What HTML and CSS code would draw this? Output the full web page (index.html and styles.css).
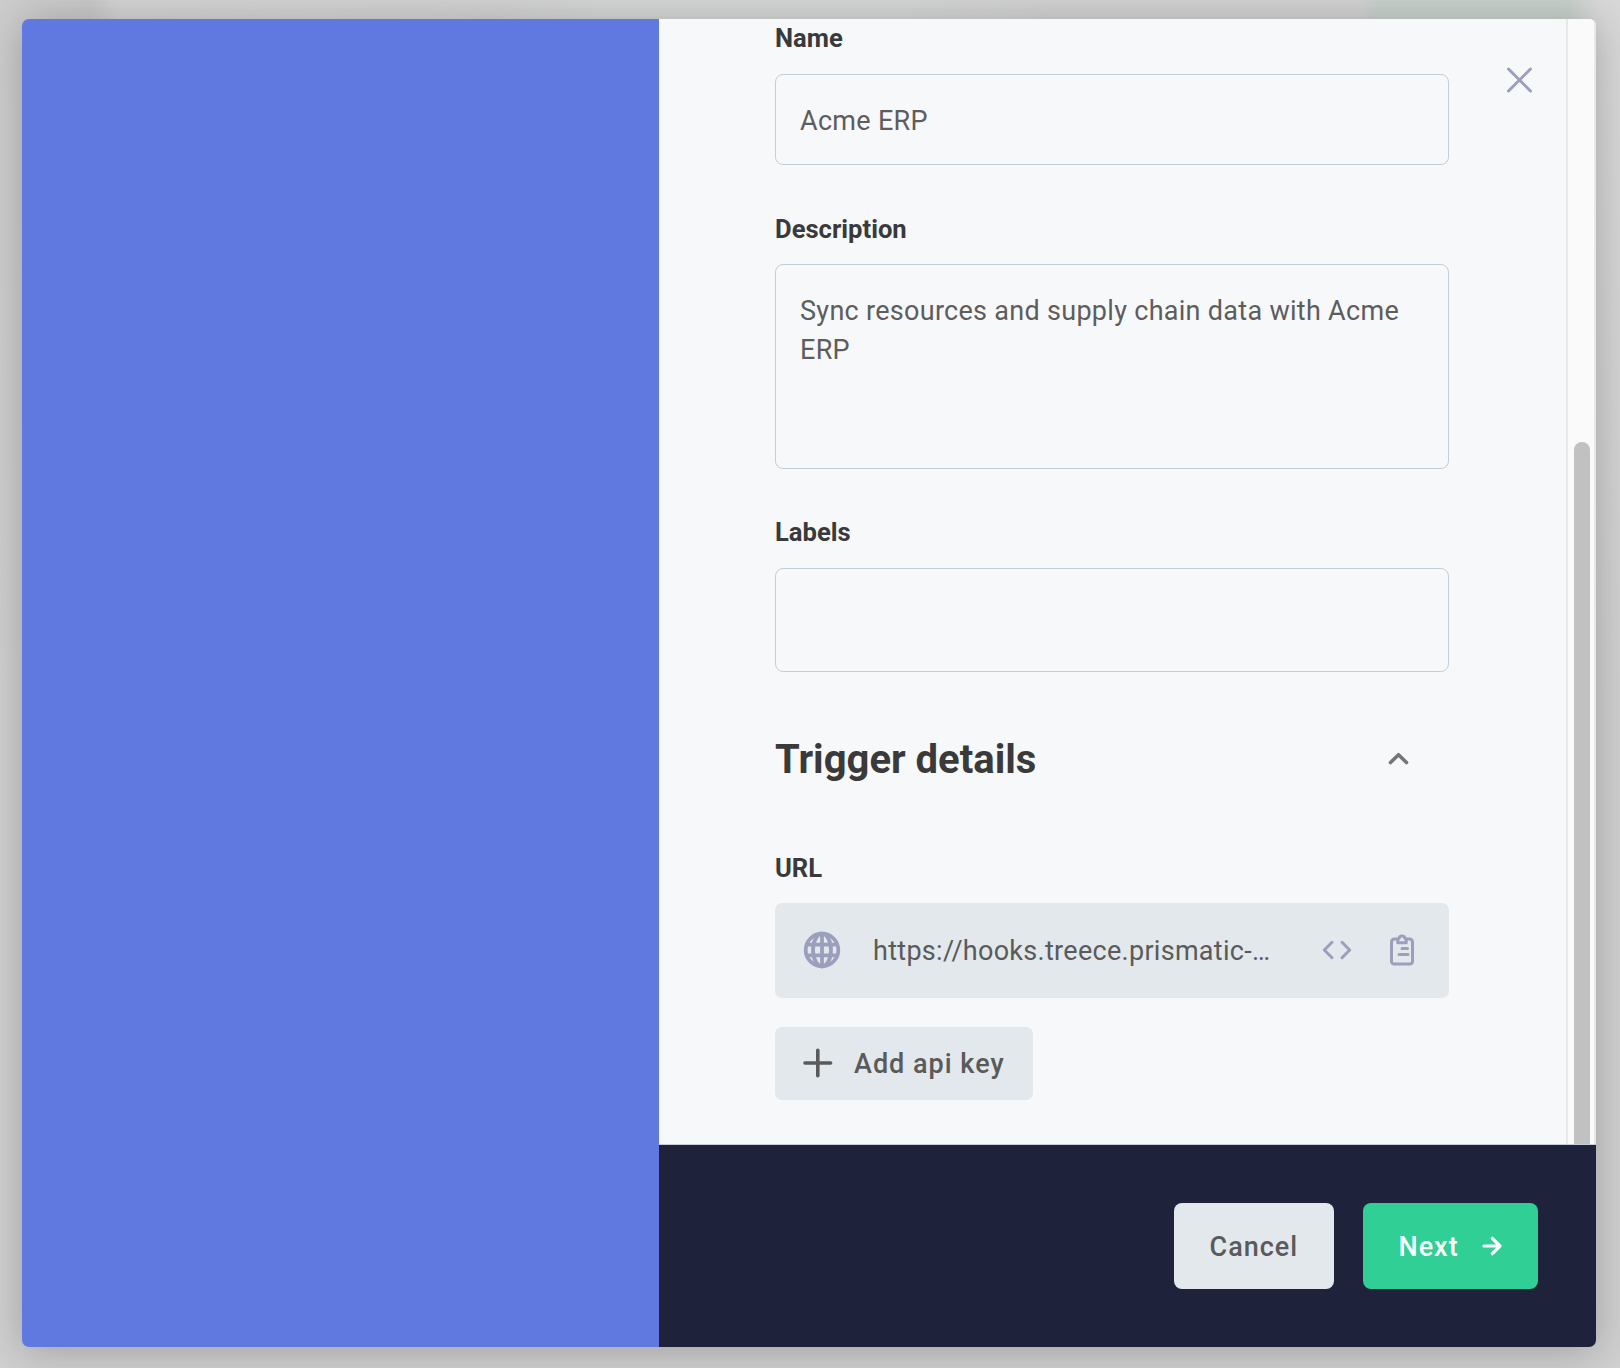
FILE: index.html
```html
<!DOCTYPE html>
<html lang="en">
<head>
<meta charset="utf-8">
<title>Acme ERP</title>
<link rel="stylesheet" href="styles.css">
</head>
<body>
<main class="modal">
  <aside class="modal-side"></aside>
  <section class="modal-main">
    <div class="modal-scroll">
      <form class="form">
        <div class="field field-name">
          <label class="label">Name</label>
          <div class="input input-name">Acme ERP</div>
        </div>
        <div class="field field-description">
          <label class="label">Description</label>
          <div class="input input-description">Sync resources and supply chain data with Acme ERP</div>
        </div>
        <div class="field field-labels">
          <label class="label">Labels</label>
          <div class="input input-labels"></div>
        </div>
        <div class="section-head">
          <h2 class="section-title">Trigger details</h2>
          <svg class="chevron" width="24" height="24" viewBox="0 0 24 24"><path d="M4.500 15.500 12.500 7.700l8 7.800"/></svg>
        </div>
        <div class="field field-url">
          <label class="label">URL</label>
          <div class="url-box">
            <svg class="globe" width="40" height="40" viewBox="0 0 40 40"><circle cx="20" cy="20" r="16.300"/><ellipse cx="20" cy="20" rx="9" ry="16.300"/><path d="M20 3.700v32.600M5 14.700h30M5 25.300h30"/></svg>
            <span class="url-text">https://hooks.treece.prismatic-…</span>
            <svg class="code" width="32" height="24" viewBox="0 0 32 24"><path d="M11 4.300 3.300 12l7.700 7.700M21 4.300 28.700 12 21 19.700"/></svg>
            <svg class="clipboard" width="28" height="34" viewBox="0 0 28 34"><path d="M9 6H6.500a3 3 0 0 0-3 3v19.500a2.500 2.500 0 0 0 2.500 2.500h16a2.500 2.500 0 0 0 2.500-2.500V9a3 3 0 0 0-3-3H19M9.800 9.700V6.800q0-1.300 1.200-1.300.300-2.500 3-2.500t3 2.500q1.200 0 1.200 1.300v2.900zM14 15.500h5.500M11 21.500h9"/></svg>
          </div>
        </div>
        <button class="add-key" type="button">
          <svg class="plus" width="30" height="30" viewBox="0 0 30 30"><path d="M14.800 2.200v25.600M2 15h25.600"/></svg>
          <span class="btn-text">Add api key</span>
        </button>
      </form>
      <svg class="close" width="28" height="28" viewBox="0 0 28 28"><path d="m3.500 3 22 22M25.500 3l-22 22"/></svg>
      <div class="scrollbar"><div class="thumb"></div></div>
    </div>
    <footer class="footer">
      <button class="btn btn-cancel" type="button"><span class="btn-text">Cancel</span></button>
      <button class="btn btn-next" type="button">
        <span class="btn-text">Next</span>
        <svg class="arrow" width="22" height="22" viewBox="0 0 22 22"><path d="M3 11h16M11.300 3.300 19 11l-7.700 7.700"/></svg>
      </button>
    </footer>
  </section>
</main>
</body>
</html>
```
FILE: styles.css
```css
* { box-sizing: border-box; }

body {
  margin: 0;
  height: 1368px;
  padding: 19px 24px 21px 22px;
  overflow: hidden;
  font-family: Roboto, "Liberation Sans", sans-serif;
  background:
    linear-gradient(180deg, rgba(208, 208, 208, 0) 0%, #d0d0d0 50%),
    linear-gradient(90deg, #cdcdcd 0, #c8c8c8 90px, #d4d4d4 120px, #d2d2d2 500px, #d4d7d5 600px, #d4d7d5 900px, #d2d2d2 1050px, #d2d2d2 1360px, #c9d1cd 1376px, #c9d1cd 1570px, #d8d8d8 1600px);
}

svg {
  display: block;
  flex: none;
  fill: none;
  stroke: #9c9fbc;
  stroke-width: 3;
  stroke-linecap: round;
  stroke-linejoin: round;
}

.modal {
  display: flex;
  height: 1328px;
  border-radius: 7px;
  overflow: hidden;
  box-shadow: 0 4px 40px rgba(0, 0, 0, 0.24);
}

.modal-side { width: 637px; background: #6079e1; }

.modal-main {
  flex: 1;
  display: flex;
  flex-direction: column;
}

.modal-scroll {
  flex: 1;
  display: flex;
  min-height: 0;
  background: #f7f8fa;
  border-bottom: 1px solid #c2ced9;
}

.form { width: 674px; margin-left: 116px; padding-top: 4px; }

.label {
  display: block;
  font-size: 25.6px;
  font-weight: 700;
  line-height: 30px;
  color: #3a3a3a;
}

.input {
  border: 1px solid #c2ced9;
  border-radius: 8px;
  padding: 0 24px;
  font-size: 27px;
  line-height: 39px;
  letter-spacing: 0.29px;
  color: #5d5d5d;
}

.input-name { height: 91px; margin-top: 21px; padding-top: 27px; }
.field-description { margin-top: 49px; }
.input-description { height: 205px; margin-top: 20px; padding-top: 27px; }
.field-labels { margin-top: 48px; }
.input-labels { height: 104px; margin-top: 21px; }

.section-head {
  display: flex;
  justify-content: space-between;
  align-items: center;
  height: 48px;
  margin-top: 64px;
  padding-right: 39px;
}

.section-title {
  margin: 0;
  font-size: 40px;
  line-height: 48px;
  font-weight: 700;
  color: #3a3a3a;
}

.chevron { margin-bottom: 2px; stroke: #757575; stroke-width: 3.6; }

.field-url { margin-top: 69px; }

.url-box {
  display: flex;
  align-items: center;
  height: 95px;
  margin-top: 20px;
  padding: 0 33px 1px 27px;
  border-radius: 7px;
  background: #e2e8ec;
}

.url-text {
  flex: 1;
  margin-left: 31px;
  padding-top: 3px;
  font-size: 27px;
  line-height: 39px;
  letter-spacing: 0.29px;
  white-space: nowrap;
  color: #5a5a5a;
}

.globe { stroke-width: 3.8; }
.clipboard { margin-left: 35px; }

.add-key {
  display: flex;
  align-items: center;
  width: 258px;
  height: 73px;
  margin-top: 29px;
  padding: 0 0 1px 28px;
  gap: 21px;
  border: 0;
  border-radius: 7px;
  background: #e2e8ec;
  color: #5a5a5a;
  font: 500 27px/39px Roboto, sans-serif;
  letter-spacing: 1px;
  white-space: nowrap;
}

.btn-text { padding-top: 2px; }

.plus { stroke: #5a5a5a; stroke-width: 3.6; }

.close { margin: 47px 0 0 56px; }

.scrollbar {
  width: 30px;
  margin-left: auto;
  padding: 423px 4px 0 6px;
  border: solid #e8e8e8;
  border-width: 0 2px;
  background: #fafafa;
}

.thumb { height: 702px; border-radius: 8px 8px 0 0; background: #c1c1c1; }

.footer {
  display: flex;
  justify-content: flex-end;
  gap: 29px;
  height: 202px;
  padding: 58px 58px 0 0;
  background: #1f223b;
}

.btn {
  display: flex;
  align-items: center;
  height: 86px;
  padding: 0 0 0 35.5px;
  border: 0;
  border-radius: 8px;
  font: 500 27px/39px Roboto, sans-serif;
  letter-spacing: 1px;
}

.btn-cancel { width: 160px; background: #e2e8ec; color: #5a5a5a; }
.btn-next { width: 175px; gap: 22px; background: #2fcf95; color: #fff; }
.arrow { stroke: #fff; stroke-width: 3.2; }
```
